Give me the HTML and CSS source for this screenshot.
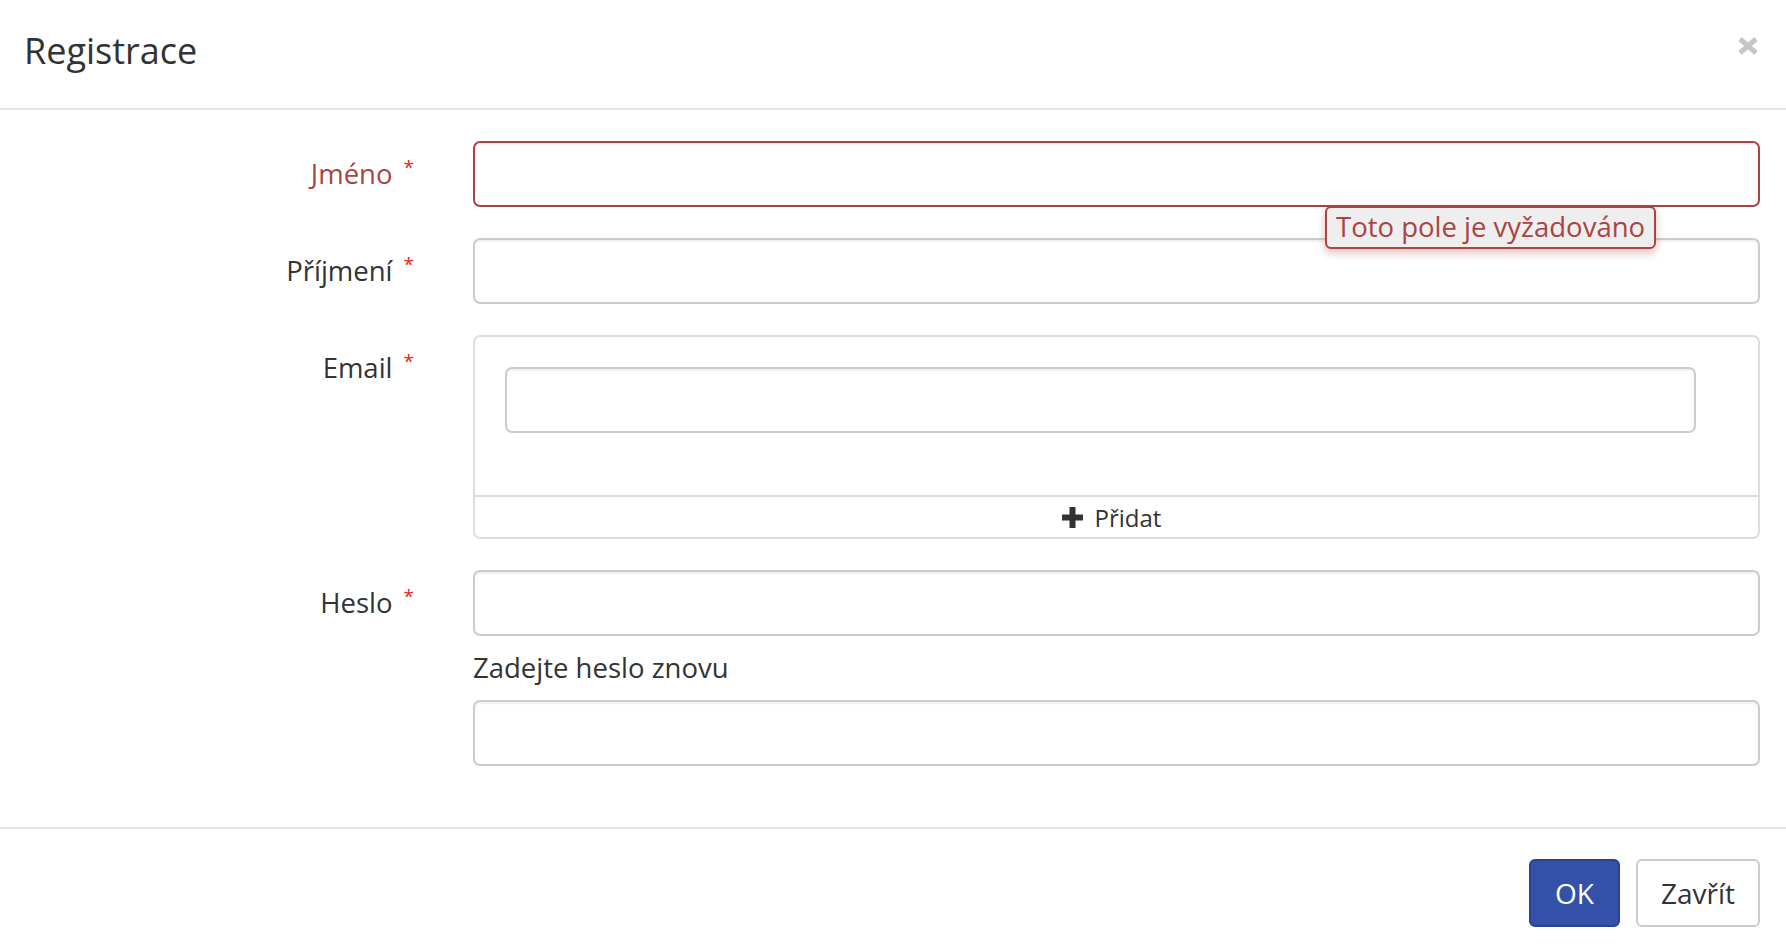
FILE: index.html
```html
<!DOCTYPE html>
<html lang="cs">
<head>
<meta charset="utf-8">
<title>Registrace</title>
<link rel="stylesheet" href="styles.css">
</head>
<body>
<div class="modal">
  <div class="modal-header">
    <h4 class="modal-title">Registrace</h4>
    <button class="close" type="button" aria-label="Zavřít">
      <svg width="20" height="18" viewBox="0 0 20 18"><path d="M2 2 L18 16 M18 2 L2 16" stroke="#c6c6c6" stroke-width="5" stroke-linecap="butt"/></svg>
    </button>
  </div>
  <div class="modal-body">
    <div class="form-row has-error">
      <label class="form-label">Jméno<span class="req">*</span></label>
      <div class="form-field">
        <input class="form-control" type="text">
        <div class="tooltip">Toto pole je vyžadováno</div>
      </div>
    </div>
    <div class="form-row">
      <label class="form-label">Příjmení<span class="req">*</span></label>
      <div class="form-field">
        <input class="form-control" type="text">
      </div>
    </div>
    <div class="form-row">
      <label class="form-label">Email<span class="req">*</span></label>
      <div class="form-field">
        <div class="panel">
          <div class="panel-body">
            <input class="form-control" type="text">
          </div>
          <div class="panel-footer">
            <svg class="plus" width="21" height="21" viewBox="0 0 21 21"><path d="M7.5 0h6v7.5h7.5v6h-7.5v7.5h-6v-7.5h-7.5v-6h7.5z" fill="#333"/></svg>
            <span>Přidat</span>
          </div>
        </div>
      </div>
    </div>
    <div class="form-row">
      <label class="form-label">Heslo<span class="req">*</span></label>
      <div class="form-field">
        <input class="form-control" type="password">
        <div class="sub-label">Zadejte heslo znovu</div>
        <input class="form-control" type="password">
      </div>
    </div>
  </div>
  <div class="modal-footer">
    <button class="btn btn-primary" type="button">OK</button>
    <button class="btn btn-default" type="button">Zavřít</button>
  </div>
</div>
</body>
</html>
```
FILE: styles.css
```css
* { box-sizing: border-box; }
html, body { margin: 0; padding: 0; background: #fff; }
body {
  font-family: "Open Sans", "Noto Sans", sans-serif;
  color: #333;
  font-size: 27.5px;
}
.modal { width: 1786px; height: 952px; }
.modal-header {
  height: 110px;
  border-bottom: 2px solid #e5e5e5;
  display: flex;
  align-items: flex-start;
  justify-content: space-between;
  padding: 0 28px 0 24px;
}
.modal-title {
  margin: 0;
  padding-top: 27px;
  font-size: 36px;
  font-weight: 400;
  line-height: 48px;
}
.close {
  border: 0;
  background: none;
  padding: 0;
  margin-top: 37px;
  cursor: pointer;
  line-height: 0;
}
.modal-body { padding: 31px 26px 30px 0; }
.form-row { display: flex; margin-bottom: 31px; }
.form-label {
  width: 416px;
  flex: none;
  text-align: right;
  padding-top: 13px;
  line-height: 40px;
}
.req {
  color: #e8231a;
  font-size: 19px;
  margin-left: 11px;
  vertical-align: top;
  position: relative;
  top: -7px;
  padding-right: 2px;
}
.has-error .form-label { color: #a94442; }
.form-field { flex: 1; margin-left: 57px; position: relative; }
.form-control {
  display: block;
  width: 100%;
  height: 66px;
  border: 2px solid #ccc;
  border-radius: 7px;
  box-shadow: inset 0 2px 2px rgba(0,0,0,0.06);
  background: #fff;
  font: inherit;
  padding: 0 20px;
  margin: 0;
}
.has-error .form-control { border-color: #a94442; }
.tooltip {
  position: absolute;
  z-index: 10;
  left: 852px;
  top: 65px;
  height: 43px;
  padding: 0 9px;
  background: #eee;
  border: 2px solid #a94442;
  border-radius: 6px;
  color: #a94442;
  line-height: 38px;
  box-shadow: 0 4px 8px rgba(169,68,66,0.35);
  white-space: nowrap;
}
.panel {
  border: 2px solid #ddd;
  border-radius: 7px;
}
.panel-body { padding: 30px 62px 62px 30px; }
.panel-footer {
  border-top: 2px solid #ddd;
  height: 42px;
  display: flex;
  align-items: center;
  justify-content: center;
  gap: 12px;
  font-size: 24px;
  padding-right: 10px;
}
.plus { display: block; }
.sub-label { margin: 11px 0 12px; line-height: 41px; }
.modal-footer {
  border-top: 2px solid #e5e5e5;
  padding: 30px 26px 0 0;
  display: flex;
  justify-content: flex-end;
  gap: 16px;
}
.btn {
  height: 68px;
  font: inherit;
  font-size: 28px;
  border-radius: 6px;
  border: 2px solid #ccc;
  background: #fff;
  color: #333;
  cursor: pointer;
}
.btn-primary {
  background: #3451a9;
  border-color: #2a4290;
  color: #fff;
  width: 91px;
  padding: 0;
}
.btn-default { width: 124px; padding: 0; }
```
